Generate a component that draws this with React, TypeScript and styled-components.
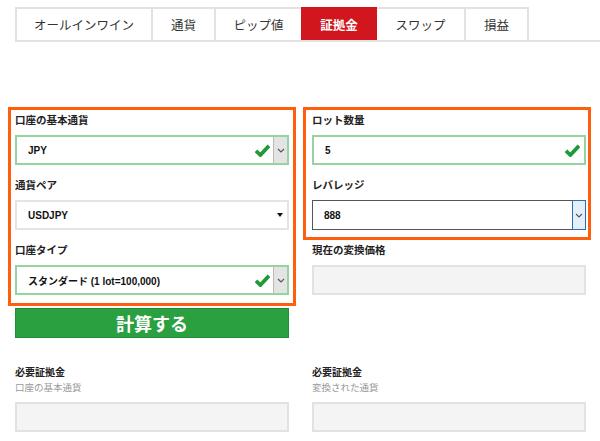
import React from "react";
import styled, { createGlobalStyle, css } from "styled-components";

const GlobalStyle = createGlobalStyle`
  html, body { margin: 0; padding: 0; background: #ffffff; }
  body { font-family: "Liberation Sans", "Noto Sans CJK JP", sans-serif; color: #222; }
  * { box-sizing: border-box; }
`;

const FONT = `"Liberation Sans", "Noto Sans CJK JP", sans-serif`;

const Page = styled.div`
  width: 600px;
  height: 441px;
  padding-top: 7px;
  overflow: hidden;
`;

const TabBar = styled.div`
  display: flex;
  margin-left: 15px;
  height: 35px;
  border-bottom: 2px solid #e2e2e2;
`;

const Tab = styled.div<{ $w: number; $active?: boolean }>`
  width: ${(p) => p.$w}px;
  height: 33px;
  display: flex;
  align-items: center;
  justify-content: center;
  font-family: ${FONT};
  font-size: 12.5px;
  border: 2px solid #e2e2e2;
  border-bottom: none;
  margin-left: -2px;
  &:first-child { margin-left: 0; }
  color: #333;
  background: #fff;
  ${(p) =>
    p.$active &&
    css`
      background: #d2161e;
      border-color: #d2161e;
      color: #fff;
      font-weight: bold;
      position: relative;
      z-index: 1;
    `}
`;

const FormGrid = styled.div`
  display: grid;
  grid-template-columns: 288px 288px;
  column-gap: 7px;
  padding-left: 8px;
  margin-top: 65px;
  align-items: start;
`;

const Column = styled.div`
  display: flex;
  flex-direction: column;
`;

const Highlight = styled.div<{ $side: "left" | "right" }>`
  border: 3px solid #ff5e0e;
  display: flex;
  flex-direction: column;
  gap: 11px;
  padding: ${(p) => (p.$side === "left" ? "1px 4px 8px 4px" : "1px 2px 7px 6px")};
`;

const Field = styled.div<{ $indent?: number }>`
  display: flex;
  flex-direction: column;
  width: ${(p) => 274 + (p.$indent || 0)}px;
  padding-left: ${(p) => p.$indent || 0}px;
  margin-top: ${(p) => (p.$indent ? 1 : 0)}px;
`;

const Label = styled.div`
  font-family: ${FONT};
  font-size: 10.5px;
  font-weight: bold;
  line-height: 18px;
  height: 18px;
  margin-bottom: 6px;
  color: #222;
  white-space: nowrap;
`;

type Variant = "valid" | "plain" | "dark" | "empty";

const Box = styled.div<{ $variant: Variant }>`
  height: 30px;
  width: 274px;
  display: flex;
  align-items: stretch;
  background: #fff;
  ${(p) =>
    p.$variant === "valid" &&
    css`
      border: 2px solid #95d3a1;
    `}
  ${(p) =>
    p.$variant === "plain" &&
    css`
      border: 2px solid #e4e4e4;
    `}
  ${(p) =>
    p.$variant === "dark" &&
    css`
      border: 1px solid #555;
      border-right: none;
    `}
  ${(p) =>
    p.$variant === "empty" &&
    css`
      border: 2px solid #e2e2e2;
      background: #f4f4f4;
    `}
`;

const Value = styled.div`
  flex: 1;
  display: flex;
  align-items: center;
  padding-left: 11px;
  font-family: ${FONT};
  font-size: 10px;
  font-weight: bold;
  color: #111;
  white-space: nowrap;
`;

const CheckWrap = styled.div<{ $gap: number }>`
  display: flex;
  align-items: center;
  margin-right: ${(p) => p.$gap}px;
`;

const ArrowSeg = styled.div<{ $blue?: boolean }>`
  width: 14px;
  display: flex;
  align-items: center;
  justify-content: center;
  background: ${(p) => (p.$blue ? "#e3f0fb" : "#e4e4e4")};
  border-left: 1px solid ${(p) => (p.$blue ? "#2c6db6" : "#b9b9b9")};
  ${(p) =>
    p.$blue &&
    css`
      border: 1px solid #2c6db6;
      margin: -1px 0;
    `}
`;

const Triangle = styled.div`
  width: 0;
  height: 0;
  border-left: 3.5px solid transparent;
  border-right: 3.5px solid transparent;
  border-top: 4px solid #111;
  margin-right: 4px;
  align-self: center;
`;

const CalcButton = styled.button`
  margin: 2px 0 0 7px;
  width: 274px;
  height: 30px;
  background: #2aa040;
  border: 1px solid #1f8f35;
  color: #fff;
  font-family: "Noto Sans CJK JP", sans-serif;
  font-size: 18px;
  font-weight: bold;
  display: flex;
  align-items: center;
  justify-content: center;
  padding: 0;
  cursor: pointer;
`;

const ResultGrid = styled.div`
  display: grid;
  grid-template-columns: 274px 274px;
  column-gap: 23px;
  padding-left: 15px;
  margin-top: 27px;
`;

const ResultField = styled.div`
  display: flex;
  flex-direction: column;
`;

const ResultTitle = styled.div`
  font-family: "Noto Sans CJK JP", sans-serif;
  font-size: 10px;
  font-weight: bold;
  line-height: 14px;
  color: #222;
`;

const ResultSub = styled.div`
  font-family: "Noto Sans CJK JP", sans-serif;
  font-size: 9.5px;
  line-height: 16px;
  color: #9a9a9a;
  margin-bottom: 7px;
`;

const Check = () => (
  <svg width="15" height="13" viewBox="0 0 15 13">
    <path d="M1 6.8 L5.4 11 L14 1.8" fill="none" stroke="#1f9a38" strokeWidth="3.8" strokeLinecap="butt" strokeLinejoin="miter" />
  </svg>
);

const Chevron = () => (
  <svg width="8" height="5" viewBox="0 0 8 5">
    <path d="M1 1 L4 4 L7 1" fill="none" stroke="#555" strokeWidth="1.1" />
  </svg>
);

const tabs: { label: string; w: number; active?: boolean }[] = [
  { label: "オールインワイン", w: 138 },
  { label: "通貨", w: 65 },
  { label: "ピップ値", w: 89 },
  { label: "証拠金", w: 76, active: true },
  { label: "スワップ", w: 91 },
  { label: "損益", w: 65 },
];

export default function App() {
  return (
    <>
      <GlobalStyle />
      <Page>
        <TabBar>
          {tabs.map((t) => (
            <Tab key={t.label} $w={t.w} $active={t.active}>
              {t.label}
            </Tab>
          ))}
        </TabBar>

        <FormGrid>
          <Column>
            <Highlight $side="left">
              <Field>
                <Label>口座の基本通貨</Label>
                <Box $variant="valid">
                  <Value>JPY</Value>
                  <CheckWrap $gap={3}>
                    <Check />
                  </CheckWrap>
                  <ArrowSeg>
                    <Chevron />
                  </ArrowSeg>
                </Box>
              </Field>
              <Field>
                <Label>通貨ペア</Label>
                <Box $variant="plain">
                  <Value>USDJPY</Value>
                  <Triangle />
                </Box>
              </Field>
              <Field>
                <Label>口座タイプ</Label>
                <Box $variant="valid">
                  <Value>スタンダード (1 lot=100,000)</Value>
                  <CheckWrap $gap={3}>
                    <Check />
                  </CheckWrap>
                  <ArrowSeg>
                    <Chevron />
                  </ArrowSeg>
                </Box>
              </Field>
            </Highlight>
            <CalcButton>計算する</CalcButton>
          </Column>

          <Column>
            <Highlight $side="right">
              <Field>
                <Label>ロット数量</Label>
                <Box $variant="valid">
                  <Value>5</Value>
                  <CheckWrap $gap={4}>
                    <Check />
                  </CheckWrap>
                </Box>
              </Field>
              <Field>
                <Label>レバレッジ</Label>
                <Box $variant="dark">
                  <Value>888</Value>
                  <ArrowSeg $blue>
                    <Chevron />
                  </ArrowSeg>
                </Box>
              </Field>
            </Highlight>
            <Field $indent={9}>
              <Label>現在の変換価格</Label>
              <Box $variant="empty" />
            </Field>
          </Column>
        </FormGrid>

        <ResultGrid>
          <ResultField>
            <ResultTitle>必要証拠金</ResultTitle>
            <ResultSub>口座の基本通貨</ResultSub>
            <Box $variant="empty" />
          </ResultField>
          <ResultField>
            <ResultTitle>必要証拠金</ResultTitle>
            <ResultSub>変換された通貨</ResultSub>
            <Box $variant="empty" />
          </ResultField>
        </ResultGrid>
      </Page>
    </>
  );
}
